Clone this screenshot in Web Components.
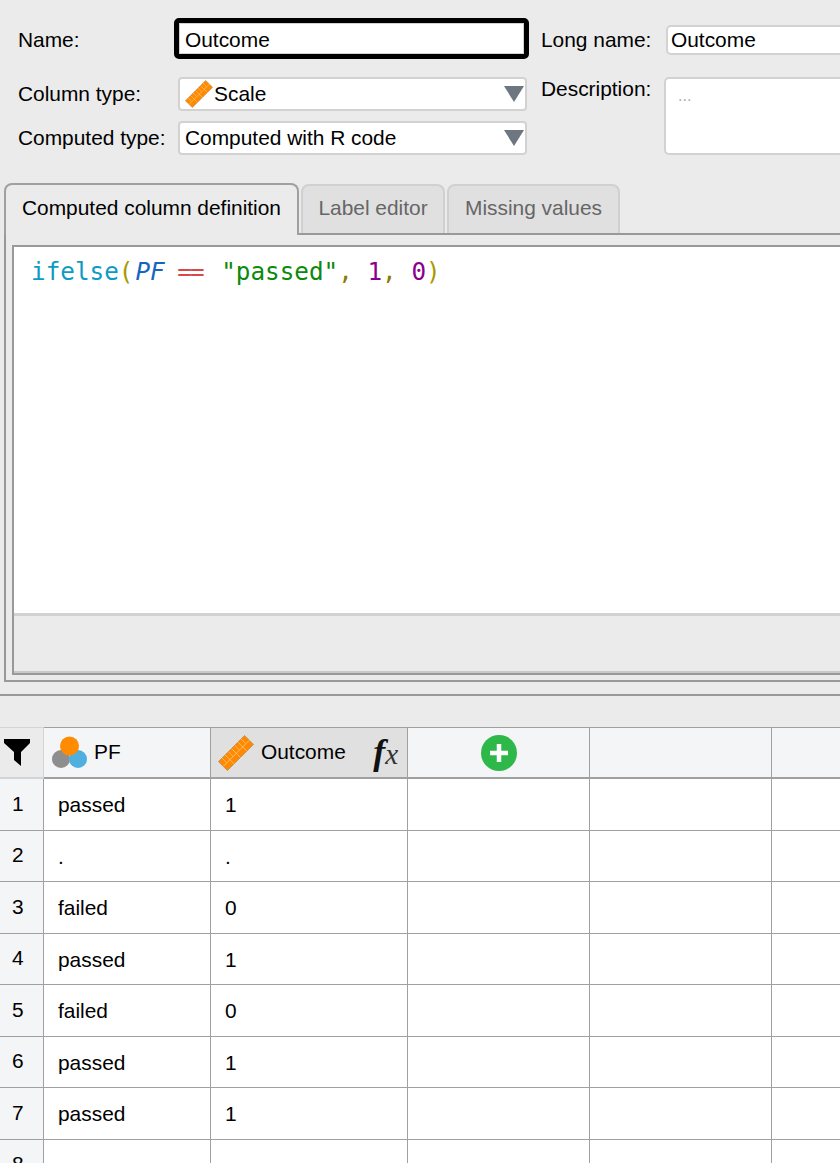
<!DOCTYPE html>
<html>
<head>
<meta charset="utf-8">
<title>Computed column</title>
<style>
  html, body { margin: 0; height: 100%; overflow: hidden; background: #ebebeb; }
  body { font: 20.9px "Liberation Sans", Arial, sans-serif; color: #000; width: 840px; }
</style>
</head>
<body>
<template id="ruler-svg">
  <svg viewBox="0 0 40 40" width="100%" height="100%">
    <g transform="rotate(-45 20 20)">
      <rect x="-0.5" y="13" width="41" height="14" fill="#ff8a00" stroke="#b98a50" stroke-width=".8"/>
      <path d="M5 13v7M10 13v14M15 13v7M20 13v14M25 13v7M30 13v14M35 13v7M-.5 20.5h41" stroke="#ffc98a" stroke-width=".8" fill="none"/>
    </g>
  </svg>
</template>

<column-editor></column-editor>

<script>
const rulerMarkup = document.getElementById('ruler-svg').innerHTML;

class RulerIcon extends HTMLElement {
    constructor() {
        super();
        this.attachShadow({ mode: 'open' }).innerHTML = `
            <style>:host { display: inline-block; width: var(--size, 28px); height: var(--size, 28px); flex: none; }</style>
            ${rulerMarkup}`;
    }
}

class TextField extends HTMLElement {
    constructor() {
        super();
        this.attachShadow({ mode: 'open' }).innerHTML = `
            <style>
                :host { display: flex; align-items: center; box-sizing: border-box; background: #fff;
                        border: 2px solid #d2d2d2; border-radius: 5px; padding: 0 3px; }
                :host([focused]) { border: 5px solid #000; box-shadow: inset 0 0 0 1px #d2d2d2; border-radius: 5px; padding: 2px 6px 0; }
                :host([multi]) { align-items: flex-start; color: #aaa; padding: 8px 12px; font-size: 16px; }
            </style>
            <slot></slot>`;
    }
}

class DropDown extends HTMLElement {
    constructor() {
        super();
        this.attachShadow({ mode: 'open' }).innerHTML = `
            <style>
                :host { display: flex; align-items: center; gap: 1px; box-sizing: border-box; height: 34px; background: #fff;
                        border: 2px solid #d2d2d2; border-radius: 4px; padding: 0 1px 0 5px; }
                .text { flex: 1; }
                svg { flex: none; }
            </style>
            <slot name="icon"></slot>
            <span class="text"><slot></slot></span>
            <svg width="20" height="16" viewBox="0 0 20 16"><path d="M0 0H20L10 16Z" fill="#6e7680"/></svg>`;
    }
}

class TabButton extends HTMLElement {
    constructor() {
        super();
        this.attachShadow({ mode: 'open' }).innerHTML = `
            <style>
                :host { display: flex; align-items: center; justify-content: center; box-sizing: border-box;
                        height: 49px; background: #e0e0e0; color: #666; border: 2px solid #d0d0d0; border-bottom: 0;
                        border-radius: 8px 8px 0 0; padding-bottom: 3px; }
                :host([active]) { background: #ebebeb; color: #000; border-color: #a0a0a0; height: 52px; margin-bottom: -2px;
                                  padding-bottom: 4px; z-index: 1; }
            </style>
            <slot></slot>`;
    }
}

class CodeLine extends HTMLElement {
    constructor() {
        super();
        this.attachShadow({ mode: 'open' }).innerHTML = `
            <style>
                :host { display: block; padding: 9px 0 0 17px; font: 24.3px/32px "DejaVu Sans Mono", monospace; }
                .line { white-space: pre; }
                .fn { color: #0d9bc4; } .br { color: #a89a00; }
                .var { color: #1565c0; font-style: italic; margin: 0 -2px 0 2px; }
                .op { color: #d94848; display: inline-block; width: 29.2px; text-align: center; letter-spacing: -2px; margin: 0 2px 0 -2px; }
                .str { color: #0b8a0b; } .pu { color: #8a7a00; } .one { color: #8b008b; }
            </style>
            <div class="line"><span class="fn">ifelse</span><span class="br">(</span><span class="var">PF</span> <span class="op">==</span> <span class="str">"passed"</span><span class="pu">,</span> <span class="one">1</span><span class="pu">,</span> <span class="one">0</span><span class="br">)</span></div>`;
    }
}

class FxBadge extends HTMLElement {
    constructor() {
        super();
        this.attachShadow({ mode: 'open' }).innerHTML = `
            <style>
                :host { display: inline-flex; align-items: baseline; font-family: "Liberation Serif", serif; font-style: italic; color: #111; }
                .f { font-size: 36px; font-weight: bold; line-height: 1; }
                .x { font-size: 29px; color: #333; line-height: 1; }
            </style>
            <span class="f">f</span><span class="x">x</span>`;
    }
}

class GridCell extends HTMLElement {
    constructor() {
        super();
        this.attachShadow({ mode: 'open' }).innerHTML = `
            <style>
                :host { display: flex; align-items: center; box-sizing: border-box; border-right: 1px solid #a0a0a0;
                        border-bottom: 1px solid #a0a0a0; padding: 2px 0 0 14px; min-width: 0; background: #fff; overflow: hidden; }
                :host([num]) { background: #f4f5f7; padding: 0 0 1px 12px; }
                :host([head]) { background: #f4f5f7; border-bottom: 2px solid #a0a0a0; border-top: 1px solid #a0a0a0; padding: 0 0 0 9px; }
                :host([corner]) { background: #ebebeb; padding-left: 4px; border-color: #d4d4d4; }
                :host([selected]) { background: #e0e0e0; }
                :host([add]) { justify-content: center; padding: 0 0 0 1px; }
            </style>
            <slot></slot>`;
    }
}

class DataGrid extends HTMLElement {
    constructor() {
        super();
        const rows = [['passed', '1'], ['.', '.'], ['failed', '0'], ['passed', '1'], ['failed', '0'], ['passed', '1'], ['passed', '1'], ['', '']];
        const body = rows.map((r, i) => `
            <grid-cell num>${i + 1}</grid-cell>
            <grid-cell>${r[0]}</grid-cell>
            <grid-cell>${r[1]}</grid-cell>
            <grid-cell></grid-cell><grid-cell></grid-cell><grid-cell></grid-cell>`).join('');
        this.attachShadow({ mode: 'open' }).innerHTML = `
            <style>
                :host { display: block; width: 960px; }
                .grid { display: grid; grid-template-columns: 44px 167px 197px 182px 182px 188px;
                        grid-template-rows: 52px repeat(8, 51.5px); }
                .pf { margin-right: 7px; flex: none; margin-left: -1px; }
                ruler-icon { --size: 36px; margin-right: 7px; margin-left: -2px; }
                .name { flex: 1; padding-bottom: 1px; }
                fx-badge { margin-right: 9px; margin-top: -2px; }
            </style>
            <div class="grid">
                <grid-cell head corner><svg width="26" height="27" viewBox="0 0 26 27"><path d="M0 0H26V4L17 13V27L10 21V13L0 4Z" fill="#000"/></svg></grid-cell>
                <grid-cell head><svg class="pf" width="35" height="33" viewBox="0 0 35 33"><circle cx="9" cy="23" r="9" fill="#8e8e8e"/><circle cx="26" cy="23" r="9" fill="#4fb0e0"/><circle cx="17.5" cy="10" r="9.5" fill="#ff8c00"/></svg><span class="name">PF</span></grid-cell>
                <grid-cell head selected><ruler-icon></ruler-icon><span class="name">Outcome</span><fx-badge></fx-badge></grid-cell>
                <grid-cell head add><svg width="36" height="36" viewBox="0 0 36 36"><circle cx="18" cy="18" r="18" fill="#2fb84a"/><path d="M18 9V27M9 18H27" stroke="#fff" stroke-width="4.5"/></svg></grid-cell>
                <grid-cell head></grid-cell>
                <grid-cell head></grid-cell>
                ${body}
            </div>`;
    }
}

class ColumnEditor extends HTMLElement {
    constructor() {
        super();
        this.attachShadow({ mode: 'open' }).innerHTML = `
            <style>
                :host { display: block; width: 1000px; height: 1163px; overflow: hidden; }
                .form { display: flex; height: 183px; box-sizing: border-box; padding-top: 18px; }
                .left { width: 541px; flex: none; display: grid; grid-template-columns: 174px 355px;
                        grid-template-rows: 41px 52px 44px; align-content: start; }
                .left .label { padding-left: 18px; display: flex; align-items: center; }
                .left .first { padding-top: 2px; }
                .left drop-down { margin: 0 2px 0 4px; }
                .left .second { margin-top: 18px; }
                .left .third { margin-top: 10px; }
                .right { flex: 1; display: grid; grid-template-columns: 123px 1fr; grid-template-rows: 30px 78px; row-gap: 22px;
                         padding-top: 7px; }
                .right .label { display: flex; align-items: center; }
                .right .top { align-items: flex-start; line-height: 24px; }
                .right text-field { margin-left: 2px; }
                .right .desc { margin-left: 0; }
                .tabs { display: flex; gap: 2px; height: 50px; margin-left: 4px; align-items: flex-end; }
                .panel { box-sizing: border-box; margin-left: 4px; height: 449px; border: 2px solid #999; border-right: 0;
                         padding: 10px 0 5px 6px; }
                .inner { box-sizing: border-box; height: 100%; border: 2px solid #999; border-right: 0;
                         display: flex; flex-direction: column; }
                .code { height: 366px; background: #fff; flex: none; }
                .status { flex: 1; border-top: 3px solid #d2d2d2; border-bottom: 2px solid #c8c8c8; }
                .split { height: 2px; background: #999; margin-top: 12px; margin-bottom: 31px; }
            </style>
            <div class="form">
                <div class="left">
                    <span class="label first">Name:</span>
                    <text-field focused>Outcome</text-field>
                    <span class="label second">Column type:</span>
                    <drop-down class="second"><ruler-icon slot="icon"></ruler-icon>Scale</drop-down>
                    <span class="label third">Computed type:</span>
                    <drop-down class="third">Computed with R code</drop-down>
                </div>
                <div class="right">
                    <span class="label">Long name:</span>
                    <text-field>Outcome</text-field>
                    <span class="label top">Description:</span>
                    <text-field multi class="desc">...</text-field>
                </div>
            </div>
            <div class="tabs">
                <tab-button active style="width:295px">Computed column definition</tab-button>
                <tab-button style="width:144px">Label editor</tab-button>
                <tab-button style="width:173px">Missing values</tab-button>
            </div>
            <div class="panel">
                <div class="inner">
                    <div class="code"><code-line></code-line></div>
                    <div class="status"></div>
                </div>
            </div>
            <div class="split"></div>
            <data-grid></data-grid>`;
    }
}

customElements.define('ruler-icon', RulerIcon);
customElements.define('text-field', TextField);
customElements.define('drop-down', DropDown);
customElements.define('tab-button', TabButton);
customElements.define('code-line', CodeLine);
customElements.define('fx-badge', FxBadge);
customElements.define('grid-cell', GridCell);
customElements.define('data-grid', DataGrid);
customElements.define('column-editor', ColumnEditor);
</script>
</body>
</html>
